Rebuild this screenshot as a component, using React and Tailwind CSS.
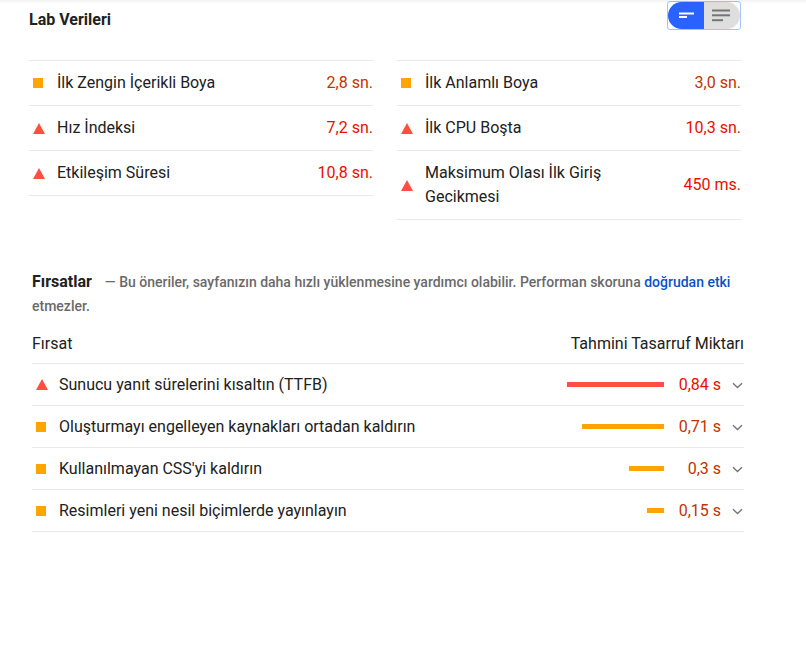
import React from "react";

const FAIL_ICON = "#ff4e42";
const AVG_ICON = "#ffa400";
const FAIL_TEXT = "text-[#eb0f00]";
const AVG_TEXT = "text-[#c33300]";

function ScoreIcon({ kind }) {
  if (kind === "fail") {
    return (
      <svg width="12" height="11" viewBox="0 0 12 11" className="shrink-0">
        <polygon points="6,0 12,11 0,11" fill={FAIL_ICON} />
      </svg>
    );
  }
  return (
    <span className="flex w-[12px] shrink-0 items-center justify-start">
      <span className="block h-[10px] w-[10px] bg-[#ffa400]" />
    </span>
  );
}

const leftMetrics = [
  { kind: "avg", label: "İlk Zengin İçerikli Boya", value: "2,8 sn." },
  { kind: "fail", label: "Hız İndeksi", value: "7,2 sn." },
  { kind: "fail", label: "Etkileşim Süresi", value: "10,8 sn." },
];

const rightMetrics = [
  { kind: "avg", label: "İlk Anlamlı Boya", value: "3,0 sn." },
  { kind: "fail", label: "İlk CPU Boşta", value: "10,3 sn." },
  { kind: "fail", label: "Maksimum Olası İlk Giriş Gecikmesi", value: "450 ms." },
];

const opportunities = [
  { kind: "fail", label: "Sunucu yanıt sürelerini kısaltın (TTFB)", value: "0,84 s", savings: 0.84 },
  { kind: "avg", label: "Oluşturmayı engelleyen kaynakları ortadan kaldırın", value: "0,71 s", savings: 0.71 },
  { kind: "avg", label: "Kullanılmayan CSS'yi kaldırın", value: "0,3 s", savings: 0.3 },
  { kind: "avg", label: "Resimleri yeni nesil biçimlerde yayınlayın", value: "0,15 s", savings: 0.15 },
];

function MetricColumn({ items }) {
  return (
    <div className="flex flex-col border-t border-[#e8e8e8]">
      {items.map((m) => (
        <div key={m.label} className="flex items-center border-b border-[#e8e8e8] py-[10px]">
          <span className="ml-[4px] flex w-[12px] shrink-0 items-center">
            <ScoreIcon kind={m.kind} />
          </span>
          <span className="ml-[12px] max-w-[200px] flex-1 text-[16px] leading-[24px] text-[#212121]">
            {m.label}
          </span>
          <span
            className={`ml-auto pl-5 text-right text-[16px] leading-[24px] ${
              m.kind === "fail" ? FAIL_TEXT : AVG_TEXT
            }`}
          >
            {m.value}
          </span>
        </div>
      ))}
    </div>
  );
}

function Chevron() {
  return (
    <svg width="11" height="7" viewBox="0 0 11 7" className="shrink-0">
      <path d="M1 1.2 L5.5 5.5 L10 1.2" fill="none" stroke="#757575" strokeWidth="1.4" />
    </svg>
  );
}

function ViewToggle() {
  return (
    <div className="mt-px flex h-[29px] w-[74px] rounded-[3px] border border-[#a4c3fb]">
      <div className="h-[27px] w-[36px] rounded-l-full bg-[#2962ff]">
        <svg width="36" height="27" viewBox="0 0 36 27">
          <rect x="11" y="10.5" width="15" height="2" fill="#fff" />
          <rect x="11" y="14" width="8" height="2" fill="#fff" />
        </svg>
      </div>
      <div className="h-[27px] flex-1 rounded-r-full bg-[#dedede]">
        <svg width="36" height="27" viewBox="0 0 36 27">
          <rect x="8" y="7.5" width="18" height="2" fill="#757575" />
          <rect x="8" y="12.3" width="18" height="2" fill="#757575" />
          <rect x="8" y="17.2" width="11" height="2" fill="#757575" />
        </svg>
      </div>
    </div>
  );
}

export default function App() {
  const maxSavings = 0.84;
  const barMax = 97;

  return (
    <div
      className="relative h-[662px] w-[806px] overflow-hidden bg-white text-[#212121]"
      style={{ fontFamily: "Roboto, 'Noto Sans', sans-serif" }}
    >
      {/* faint shadow under the sticky header */}
      <div className="pointer-events-none absolute inset-x-0 top-0 h-[4px] bg-linear-to-b from-black/5 to-transparent" />

      <div className="pl-[29px] pr-[65px]">
        {/* Lab data header */}
        <div className="flex items-start justify-between">
          <h2 className="mt-[8px] text-[16px] font-bold leading-[24px] text-[#212121]">Lab Verileri</h2>
          <ViewToggle />
        </div>

        {/* Metrics */}
        <div className="mt-[28px] grid grid-cols-2 items-start gap-x-6">
          <MetricColumn items={leftMetrics} />
          <MetricColumn items={rightMetrics} />
        </div>

        {/* Opportunities */}
        <div className="ml-[3px] mr-[-3px] mt-[50px]">
          <div className="leading-[24px]">
            <span className="text-[16px] font-bold text-[#212121]">Fırsatlar</span>
            <span className="ml-[13px] text-[14px] font-medium text-[#6a6a6a]">
              — Bu öneriler, sayfanızın daha hızlı yüklenmesine yardımcı olabilir. Performan skoruna{" "}
              <a className="text-[#0c50c7]">doğrudan etki</a> etmezler.
            </span>
          </div>

          <div className="mt-[14px] flex items-center justify-between border-b border-[#e8e8e8] pb-[7px] text-[16px] leading-[24px] text-[#212121]">
            <span>Fırsat</span>
            <span>Tahmini Tasarruf Miktarı</span>
          </div>

          {opportunities.map((o) => (
            <div key={o.label} className="flex h-[42px] items-center border-b border-[#e8e8e8]">
              <span className="ml-[4px] flex w-[12px] shrink-0 items-center">
                <ScoreIcon kind={o.kind} />
              </span>
              <span className="ml-[11px] flex-1 text-[16px] leading-[24px] text-[#212121]">{o.label}</span>
              <div className="flex w-[100px] justify-end">
                <div
                  className="h-[5px]"
                  style={{
                    width: `${Math.round((o.savings / maxSavings) * barMax)}px`,
                    backgroundColor: o.kind === "fail" ? FAIL_ICON : AVG_ICON,
                  }}
                />
              </div>
              <span
                className={`w-[57px] text-right text-[16px] leading-[24px] ${
                  o.kind === "fail" ? FAIL_TEXT : AVG_TEXT
                }`}
              >
                {o.value}
              </span>
              <span className="flex w-[23px] justify-end pr-px pt-[2px]">
                <Chevron />
              </span>
            </div>
          ))}
        </div>
      </div>
    </div>
  );
}
